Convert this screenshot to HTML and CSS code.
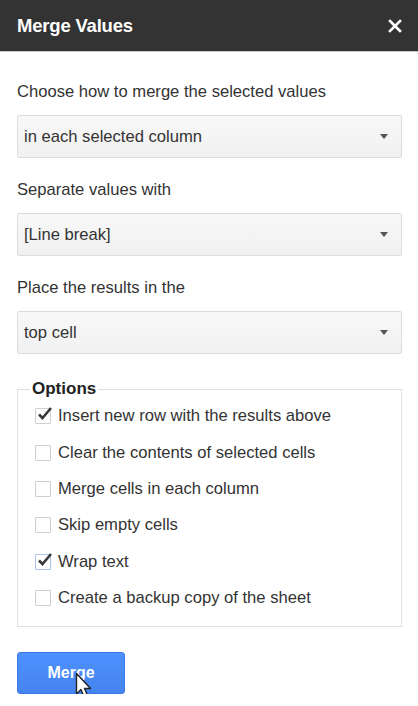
FILE: index.html
```html
<!DOCTYPE html>
<html lang="en">
<head>
  <meta charset="UTF-8">
  <title>Merge Values</title>
  <meta name="viewport" content="width=device-width, initial-scale=1">
  <link rel="stylesheet" href="styles.css">
</head>
<body>

  <div class="titlebar">
    <h1>Merge Values</h1>
    <span class="close">
      <svg width="14" height="14" viewBox="0 0 14 14"><path d="M2 2 L12 12 M12 2 L2 12" stroke="#fff" stroke-width="2.6" stroke-linecap="square"/></svg>
    </span>
  </div>

  <div class="content">
    <label class="label">Choose how to merge the selected values</label>
    <div class="select">
      <span>in each selected column</span>
      <span class="caret"></span>
    </div>

    <label class="label">Separate values with</label>
    <div class="select">
      <span>[Line break]</span>
      <span class="caret"></span>
    </div>

    <label class="label">Place the results in the</label>
    <div class="select">
      <span>top cell</span>
      <span class="caret"></span>
    </div>

    <fieldset class="options">
      <legend>Options</legend>
      <div class="row"><span class="check on"><svg width="16" height="16" viewBox="0 0 16 16"><path d="M3 8.5 L6.5 12 L15 2" fill="none" stroke="#3a3a3a" stroke-width="2.6"/></svg></span>Insert new row with the results above</div>
      <div class="row"><span class="check"></span>Clear the contents of selected cells</div>
      <div class="row"><span class="check"></span>Merge cells in each column</div>
      <div class="row"><span class="check"></span>Skip empty cells</div>
      <div class="row"><span class="check on focus"><svg width="16" height="16" viewBox="0 0 16 16"><path d="M3 8.5 L6.5 12 L15 2" fill="none" stroke="#3a3a3a" stroke-width="2.6"/></svg></span>Wrap text</div>
      <div class="row"><span class="check"></span>Create a backup copy of the sheet</div>
    </fieldset>

    <div class="actions">
      <button class="merge">Merge</button>
      <svg class="cursor" width="20" height="30" viewBox="0 0 20 30">
        <path d="M1.5 1.5 L1.5 22 L6 17.5 L9.5 26 L13 24.5 L9.5 16.5 L15.5 16.5 Z" fill="#fff" stroke="#222" stroke-width="1.4" stroke-linejoin="round"/>
      </svg>
    </div>
  </div>

</body>
</html>
```

FILE: styles.css
```css
body {
  margin: 0;
  font-family: 'Liberation Sans', Arial, sans-serif;
  background: #ffffff;
  color: #333;
}

.titlebar {
  background: #333333;
  height: 51px;
  border-bottom: 1px solid #c8c8c8;
  display: flex;
  align-items: center;
  justify-content: space-between;
  padding: 0 16px 0 17px;
}

.titlebar h1 {
  margin: 0;
  color: #fff;
  font-size: 18.5px;
  font-weight: bold;
  letter-spacing: -0.2px;
}

.close {
  display: flex;
  width: 14px;
  height: 14px;
}

.content {
  padding: 31px 16px 0 17px;
}

.label {
  display: block;
  font-size: 16.6px;
  line-height: 18px;
  color: #333;
  margin-bottom: 14px;
}

.select {
  height: 41px;
  border: 1px solid #dcdcdc;
  border-radius: 2px;
  background: linear-gradient(#f8f8f8, #f1f1f1);
  display: flex;
  align-items: center;
  justify-content: space-between;
  padding: 0 13px 0 6px;
  font-size: 16.6px;
  color: #333;
  margin-bottom: 23px;
}

.caret {
  width: 0;
  height: 0;
  border-left: 4px solid transparent;
  border-right: 4px solid transparent;
  border-top: 5px solid #555;
}

.options {
  margin: 26px 0 0 0;
  border: 1px solid #e0e0e0;
  padding: 0 16px 10px 17px;
}

.options legend {
  font-size: 17px;
  font-weight: bold;
  line-height: 18px;
  color: #222;
  padding: 0 2px;
  margin-left: -5px;
}

.row {
  height: 36.4px;
  display: flex;
  align-items: center;
  font-size: 16.6px;
  color: #333;
}

.check {
  width: 14px;
  height: 14px;
  border: 1px solid #cfcfcf;
  border-radius: 1px;
  margin-right: 7px;
  position: relative;
  background: #fff;
  flex-shrink: 0;
}

.check svg {
  position: absolute;
  left: 0;
  top: -3px;
}

.check.focus {
  border-color: #a9c4ee;
}

.actions {
  margin-top: 25px;
  position: relative;
}

.merge {
  width: 108px;
  height: 42px;
  background: linear-gradient(#4d90fe, #4584ee);
  border: 1px solid #3b78e7;
  border-radius: 3px;
  color: #fff;
  font-family: 'Liberation Sans', Arial, sans-serif;
  font-size: 16px;
  font-weight: bold;
}

.cursor {
  position: absolute;
  left: 58px;
  top: 20px;
}
```
